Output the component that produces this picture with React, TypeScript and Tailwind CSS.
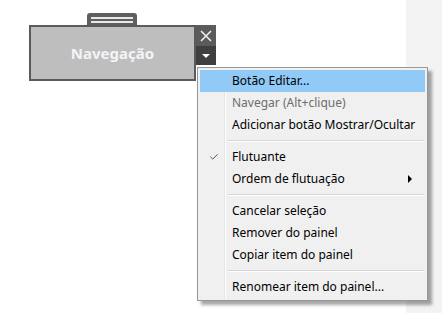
import { Check } from 'lucide-react';

type Item = { label: string; disabled?: boolean; active?: boolean; checked?: boolean; sub?: boolean } | 'sep';

const items: Item[] = [
    { label: 'Botão Editar...', active: true },
    { label: 'Navegar (Alt+clique)', disabled: true },
    { label: 'Adicionar botão Mostrar/Ocultar' },
    'sep',
    { label: 'Flutuante', checked: true },
    { label: 'Ordem de flutuação', sub: true },
    'sep',
    { label: 'Cancelar seleção' },
    { label: 'Remover do painel' },
    { label: 'Copiar item do painel' },
    'sep',
    { label: 'Renomear item do painel...' },
];

function ContextMenu() {
    return (
        <div className="absolute left-[197px] top-[67px] w-[231px] border border-[#979797] bg-[#f0f0f0] py-[2px] px-[2px] shadow-[4px_4px_3px_rgba(0,0,0,0.35)]">
            {/* icon column divider */}
            <div className="absolute left-[26px] top-[2px] bottom-[2px] w-[2px] border-l border-[#e2e3e3] bg-[#f0f0f0] border-r border-r-white" />
            {items.map((item, i) =>
                item === 'sep' ? (
                    <div key={i} className="h-[10px] pl-[28px] pr-[1px] flex items-center">
                        <div className="w-full h-[2px] border-t border-[#d7d7d7] border-b border-b-white" />
                    </div>
                ) : (
                    <div
                        key={i}
                        className={`relative h-[22px] flex items-center pl-[32px] text-[12px] ${item.active ? 'bg-[#91c9f7]' : ''} ${item.disabled ? 'text-[#6d6d6d]' : 'text-black'}`}
                    >
                        {item.checked && (
                            <Check size={10} strokeWidth={2} className="absolute left-[9px] top-[6px] text-[#333]" />
                        )}
                        <span className="leading-none">{item.label}</span>
                        {item.sub && (
                            <span className="absolute right-[13px] top-[7px] w-0 h-0 border-y-[4px] border-y-transparent border-l-[4px] border-l-black" />
                        )}
                    </div>
                )
            )}
        </div>
    );
}

export default function App() {
    return (
        <div className="relative w-[442px] h-[313px] flex bg-white overflow-hidden" style={{ fontFamily: '"Noto Sans", "Open Sans", sans-serif' }}>
            <div className="flex-1 pl-[29px] pt-[13px]">
                {/* Floating panel item */}
                <div className="flex flex-col">
                    <div className="ml-[58px] w-[50px] h-[12px] rounded-t-[3px] bg-[#5f5f5f] flex flex-col items-center justify-center gap-[2px] pt-[1px]">
                        <div className="w-[42px] h-[2px] bg-[#e8e8e8]" />
                        <div className="w-[42px] h-[2px] bg-[#e8e8e8]" />
                    </div>
                    <div className="flex items-start">
                        <div className="w-[167px] h-[56px] border-2 border-[#5b5b5b] bg-[#bebebe] flex items-center justify-center">
                            <span className="text-[15px] font-bold text-[#f3f4f8] leading-none">Navegação</span>
                        </div>
                        <div className="flex flex-col w-[20px]">
                            <div className="h-[21px] bg-[#5b5b5b] flex items-center justify-center">
                                <svg width="12" height="12" viewBox="0 0 12 12">
                                    <path d="M1 1L11 11M11 1L1 11" stroke="#eeeeee" strokeWidth="1.6" />
                                </svg>
                            </div>
                            <div className="h-[19px] bg-[#3f3f3f] flex items-center justify-center">
                                <span className="w-0 h-0 border-x-[4px] border-x-transparent border-t-[4px] border-t-white" />
                            </div>
                        </div>
                    </div>
                </div>
            </div>
            <div className="w-[36px] h-full bg-[#f3f3f3]" />
            <ContextMenu />
        </div>
    );
}
